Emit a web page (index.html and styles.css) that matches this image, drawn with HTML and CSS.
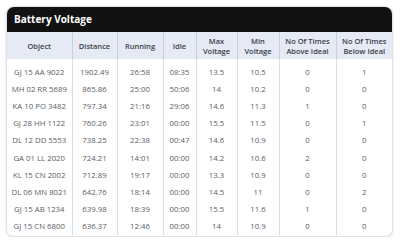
FILE: index.html
```html
<!DOCTYPE html>
<html>
<head>
<meta charset="utf-8">
<link rel="stylesheet" href="styles.css">
</head>
<body>
<div class="card">
  <div class="card-title">Battery Voltage</div>
  <table class="grid">
    <colgroup>
      <col class="c-obj"><col class="c-dist"><col class="c-run"><col class="c-idle"><col class="c-max"><col class="c-min"><col class="c-above"><col class="c-below">
    </colgroup>
    <thead>
      <tr>
        <th>Object</th><th>Distance</th><th>Running</th><th>Idle</th><th>Max<br>Voltage</th><th>Min<br>Voltage</th><th>No Of Times<br>Above Ideal</th><th>No Of Times<br>Below Ideal</th>
      </tr>
    </thead>
    <tbody>
      <tr><td>GJ 15 AA 9022</td><td>1902.49</td><td>26:58</td><td>08:35</td><td>13.5</td><td>10.5</td><td>0</td><td>1</td></tr>
      <tr><td>MH 02 RR 5689</td><td>865.86</td><td>25:00</td><td>50:06</td><td>14</td><td>10.2</td><td>0</td><td>0</td></tr>
      <tr><td>KA 10 PO 3482</td><td>797.34</td><td>21:16</td><td>29:06</td><td>14.6</td><td>11.3</td><td>1</td><td>0</td></tr>
      <tr><td>GJ 28 HH 1122</td><td>760.26</td><td>23:01</td><td>00:00</td><td>15.5</td><td>11.5</td><td>0</td><td>1</td></tr>
      <tr><td>DL 12 DD 5553</td><td>738.25</td><td>22:38</td><td>00:47</td><td>14.6</td><td>10.9</td><td>0</td><td>0</td></tr>
      <tr><td>GA 01 LL 2020</td><td>724.21</td><td>14:01</td><td>00:00</td><td>14.2</td><td>10.6</td><td>2</td><td>0</td></tr>
      <tr><td>KL 15 CN 2002</td><td>712.89</td><td>19:17</td><td>00:00</td><td>13.3</td><td>10.9</td><td>0</td><td>0</td></tr>
      <tr><td>DL 06 MN 8021</td><td>642.76</td><td>18:14</td><td>00:00</td><td>14.5</td><td>11</td><td>0</td><td>2</td></tr>
      <tr><td>GJ 15 AB 1234</td><td>639.98</td><td>18:39</td><td>00:00</td><td>15.5</td><td>11.6</td><td>1</td><td>0</td></tr>
      <tr><td>GJ 15 CN 6800</td><td>636.37</td><td>12:46</td><td>00:00</td><td>14</td><td>10.9</td><td>0</td><td>0</td></tr>
    </tbody>
  </table>
</div>
</body>
</html>
```
FILE: styles.css
```css
html, body {
  margin: 0;
  padding: 0;
  background: #ffffff;
}
body {
  font-family: "Open Sans", "Noto Sans", sans-serif;
  padding: 6px 0 0 6px;
}
.card {
  box-sizing: border-box;
  width: 387px;
  border: 1px solid #dfe2e7;
  border-radius: 8px;
  overflow: hidden;
  background: #fff;
  box-shadow: 0 1px 3px rgba(0, 0, 0, 0.12);
  padding-bottom: 1px;
}
.card-title {
  background: #121212;
  color: #ffffff;
  font-weight: 700;
  font-size: 10px;
  height: 25px;
  line-height: 25px;
  padding-left: 7px;
}
.grid {
  width: 100%;
  border-collapse: collapse;
  table-layout: fixed;
}
.c-obj { width: 65px; }
.c-dist { width: 45px; }
.c-run { width: 46px; }
.c-idle { width: 33px; }
.c-max { width: 41px; }
.c-min { width: 42px; }
.c-above { width: 57px; }
.c-below { width: 56px; }
.grid th {
  background: #e5eaf4;
  color: #3b404a;
  font-weight: 600;
  font-size: 7.5px;
  line-height: 10px;
  height: 27px;
  padding: 0;
  text-align: center;
  vertical-align: middle;
  border-left: 1px solid #c9d0dc;
}
.grid td {
  color: #5a5e66;
  font-size: 7.8px;
  height: 17.2px;
  padding: 0;
  text-align: center;
  vertical-align: middle;
  border-left: 1px solid #d9dde4;
}
.grid th:first-child,
.grid td:first-child {
  border-left: none;
}
.grid tbody tr:first-child td {
  padding-top: 4px;
}
```
